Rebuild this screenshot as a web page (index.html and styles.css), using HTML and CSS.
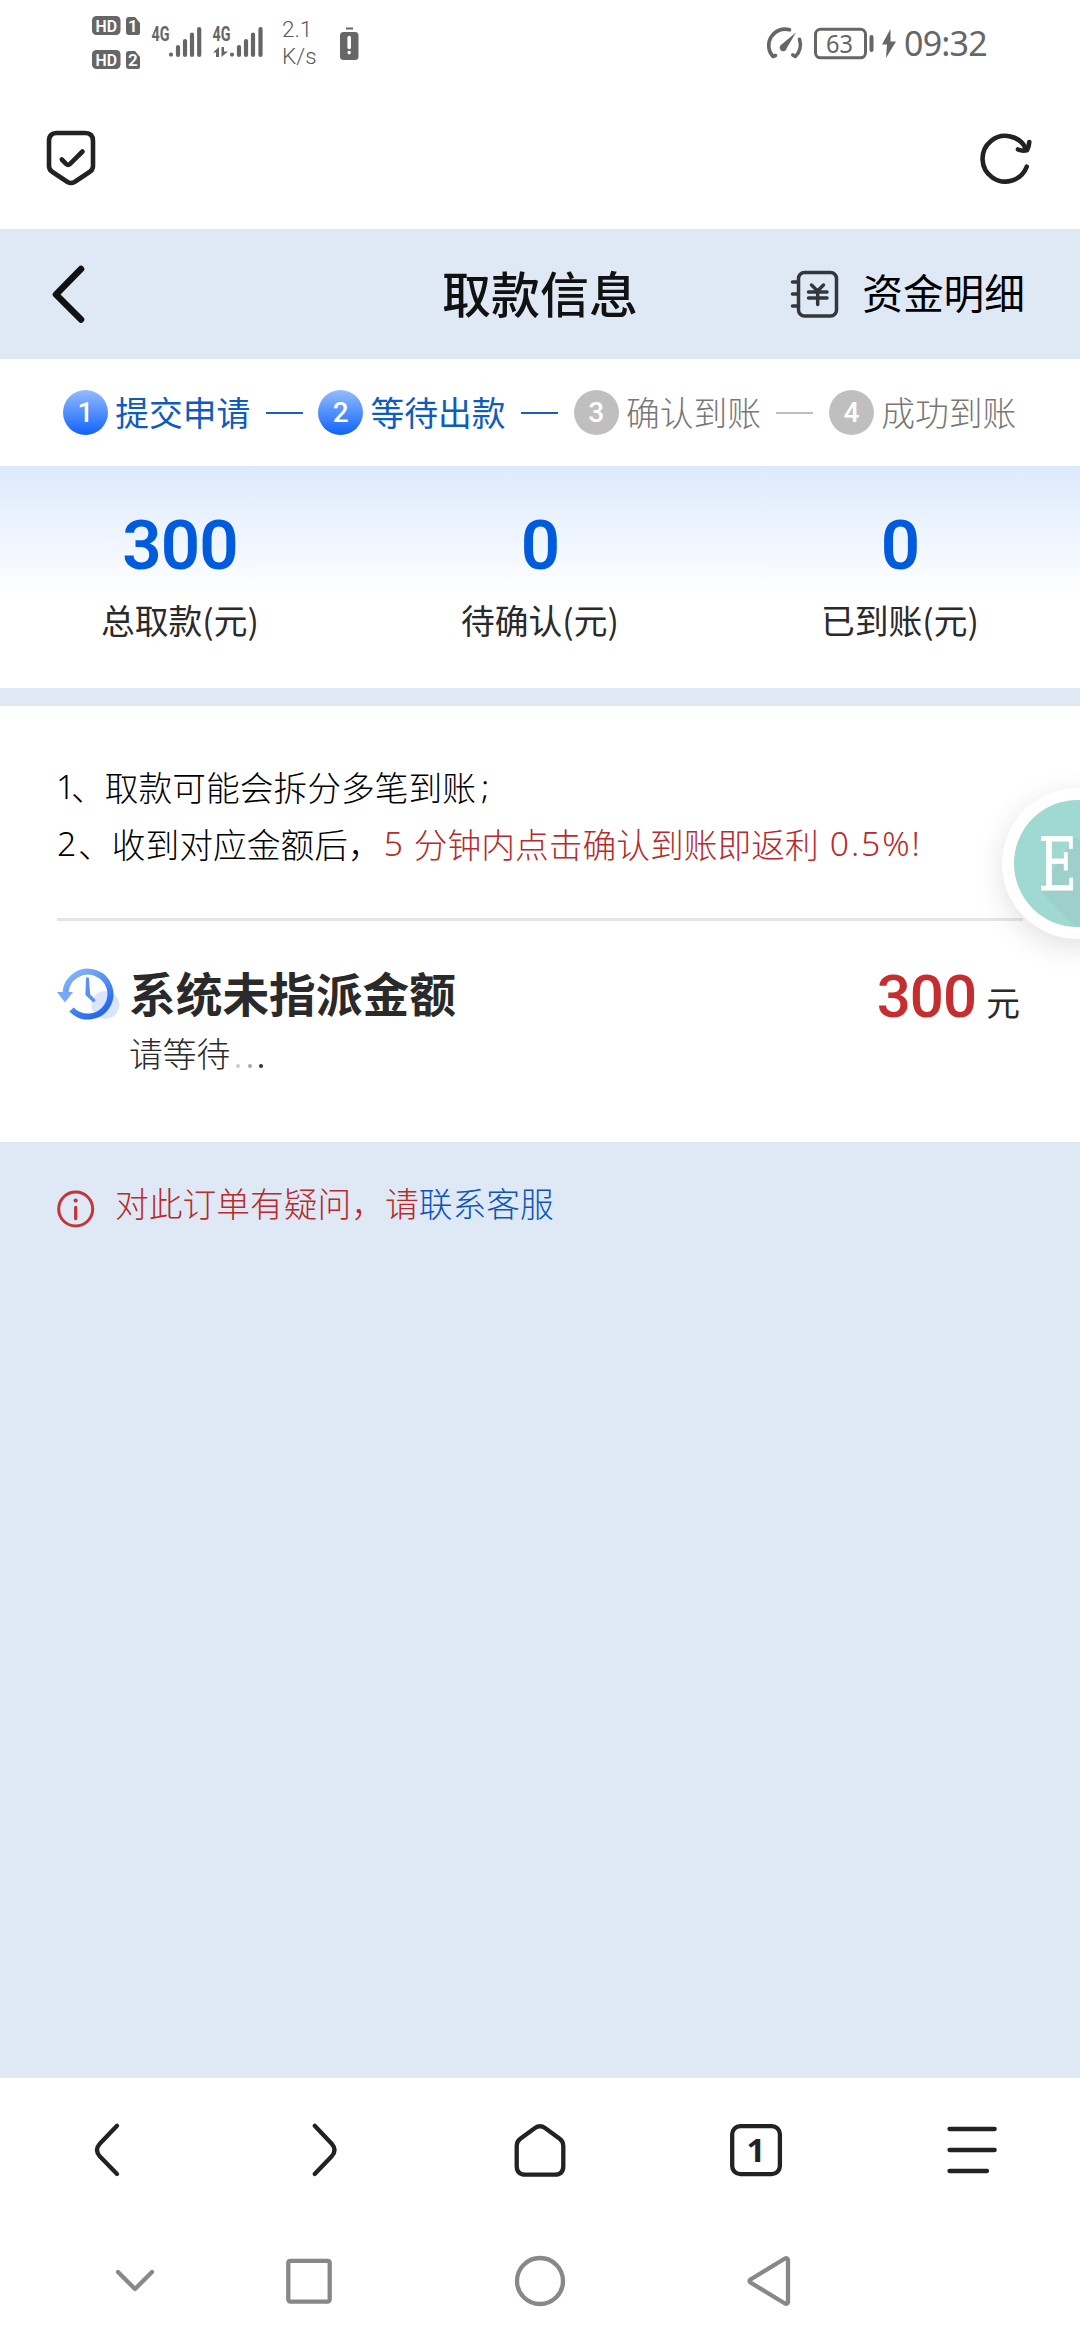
FILE: index.html
```html
<!DOCTYPE html>
<html lang="zh-CN">
<head>
<meta charset="utf-8">
<title>取款信息</title>
<link rel="stylesheet" href="styles.css">
</head>
<body>
<div class="screen">
  <div class="status-bar">
    <svg class="signals" width="174" height="60" viewBox="90 13 174 60">
      <g fill="#666">
        <rect x="92" y="16" width="28.5" height="19" rx="4.5"/>
        <rect x="92" y="50" width="28.5" height="19" rx="4.5"/>
        <path d="M129 17h6l5 6v10q0 2-2 2h-9q-3 0-3-3V20q0-3 3-3z"/>
        <path d="M129 51h6l5 6v10q0 2-2 2h-9q-3 0-3-3V54q0-3 3-3z"/>
      </g>
      <g class="badge-text">
        <text x="95.500" y="31.500" textLength="21.500" lengthAdjust="spacingAndGlyphs">HD</text>
        <text x="95.500" y="65.500" textLength="21.500" lengthAdjust="spacingAndGlyphs">HD</text>
        <text x="128" y="32">1</text>
        <text x="128" y="66">2</text>
      </g>
      <g class="net-text">
        <text x="151.500" y="41" textLength="18" lengthAdjust="spacingAndGlyphs">4G</text>
        <text x="212.500" y="41" textLength="18" lengthAdjust="spacingAndGlyphs">4G</text>
      </g>
      <g stroke="#666" stroke-width="4.2" stroke-linecap="round">
        <path d="M171 54.5v.1M178 47v8M185 41v14M192 34.500v20.500M199.200 29v26"/>
        <path d="M232 54.500v.1M239 47v8M246 41v14M253 34.500v20.500M260.500 29v26"/>
      </g>
      <path fill="#666" d="M213 52.500l6-5.500v10h-3v-4.500zM221.500 47h2.500v4.500h4l-6.500 5.500z"/>
    </svg>
    <div class="speed"><span>2.1</span><span>K/s</span></div>
    <svg class="sim-alert" width="19" height="33" viewBox="0 0 19 33">
      <path d="M6 1.500h7" stroke="#666" stroke-width="2"/>
      <rect y="5" width="18.500" height="28" rx="3.500" fill="#666"/>
      <path d="M9.200 10.500v10M9.200 25.500v.1" stroke="#fff" stroke-width="3.600" stroke-linecap="round"/>
    </svg>
    <svg class="gauge" width="38" height="33" viewBox="0 0 38 33">
      <g fill="none" stroke="#666" stroke-width="3.600" stroke-linecap="round" stroke-linejoin="round">
        <path d="M10.500 28.500L8 29.500A16.300 16.300 0 0 1 24.500 2.800M34.500 12.300A16.500 16.500 0 0 1 30.300 29.500l-2.500-1.500"/>
      </g>
      <path d="M31 5.500L21.800 21a3.600 3.600 0 1 1-5.300-3.500z" fill="#666"/>
    </svg>
    <svg class="battery" width="60" height="33" viewBox="0 0 60 33">
      <rect x="1.500" y="2.300" width="50" height="28.500" rx="5" fill="none" stroke="#666" stroke-width="3"/>
      <rect x="55.500" y="8" width="4" height="17" rx="2" fill="#666"/>
      <text x="12" y="25.500" textLength="27" lengthAdjust="spacingAndGlyphs">63</text>
    </svg>
    <svg class="bolt" width="14" height="29" viewBox="0 0 14 29"><path d="M8.500 0L0 15.500h5L4 29l10-16.500H8.500z" fill="#666"/></svg>
    <span class="clock">09:32</span>
  </div>

  <div class="browser-bar">
    <svg width="50" height="56" viewBox="0 0 50 56" fill="none" stroke="#222" stroke-width="4.600" stroke-linecap="round" stroke-linejoin="round">
      <path d="M11 3h28q8 0 8 8v25q0 4-3.500 6L28.500 52q-3.500 2-7 0L6.500 42Q3 40 3 36V11q0-8 8-8z"/>
      <path d="M15.800 29.500l4.300 4.300q2 2 4 0L36.500 21.500"/>
    </svg>
    <svg width="52" height="52" viewBox="0 0 52 52" fill="none" stroke="#222" stroke-width="4.600" stroke-linecap="round" stroke-linejoin="round">
      <path d="M46.700 34.700A22.800 22.800 0 1 1 46 17"/>
      <path d="M38 17.500q4 1.800 9 .8Q49 14 49.300 10"/>
    </svg>
  </div>

  <header class="page-header">
    <svg class="back" width="34" height="58" viewBox="0 0 34 58" fill="none" stroke="#111" stroke-width="6.600" stroke-linecap="round" stroke-linejoin="round"><path d="M30 4L5 29.500 30 54.500"/></svg>
    <h1>取款信息</h1>
    <a class="detail">
      <svg width="48" height="48" viewBox="0 0 48 48" fill="none" stroke="#33373d" stroke-width="3.500" stroke-linecap="round">
        <rect x="7.500" y="2.500" width="38" height="43.500" rx="6"/>
        <path d="M1.500 12h6M1.500 24h6M1.500 36h6"/>
        <path d="M20.500 15l6 6M32.500 15L26.500 21M17.500 22h18.500M17.500 28h18.500M26.700 22v12.500"/>
      </svg>
      <span>资金明细</span>
    </a>
  </header>

  <ol class="steps">
    <li class="step done"><b>1</b><span>提交申请</span></li>
    <li class="step done"><b>2</b><span>等待出款</span></li>
    <li class="step"><b>3</b><span>确认到账</span></li>
    <li class="step"><b>4</b><span>成功到账</span></li>
  </ol>

  <section class="stats">
    <div class="stat"><strong>300</strong><span>总取款(元)</span></div>
    <div class="stat"><strong>0</strong><span>待确认(元)</span></div>
    <div class="stat"><strong>0</strong><span>已到账(元)</span></div>
  </section>

  <section class="card">
    <div class="notes">
      <p><i class="n1">1</i>、取款可能会拆分多笔到账<i class="semi">;</i></p>
      <p><i class="n2">2</i>、收到对应金额后<span class="comma">，</span><em><i class="n5">5</i>分钟内点击确认到账即返利<i class="rate">0.5%!</i></em></p>
    </div>
    <div class="pending">
      <svg class="clock-icon" width="63" height="52" viewBox="0 0 63 52">
        <defs><linearGradient id="ring" x1="0" y1="0" x2=".7" y2="1"><stop offset="0" stop-color="#8dbbfa"/><stop offset="1" stop-color="#2468ec"/></linearGradient></defs>
        <circle cx="48.300" cy="37" r="14" fill="#dae5fc"/>
        <path d="M8.500 24A22.500 22.500 0 1 1 14.500 41.500" fill="none" stroke="url(#ring)" stroke-width="6"/>
        <path d="M0 24h16L8 34.500z" fill="#79a9f6"/>
        <path d="M29 9.500h2.800l1.400 16.700 5.600 6-2.400 2.300-8-7.500z" fill="#5a91f4"/>
      </svg>
      <div class="pending-text">
        <h2>系统未指派金额</h2>
        <p>请等待<span class="dots"><i></i><i></i><i></i></span></p>
      </div>
      <div class="amount"><strong>300</strong><span>元</span></div>
    </div>
  </section>

  <div class="help">
    <svg width="38" height="38" viewBox="0 0 38 38" fill="none" stroke="#c33537" stroke-linecap="round">
      <circle cx="18.700" cy="19" r="17" stroke-width="3"/>
      <path d="M18.700 17.500v11" stroke-width="3.300"/><path d="M18.700 10.500v.1" stroke-width="4.200"/>
    </svg>
    <p>对此订单有疑问，请<a>联系客服</a></p>
  </div>

  <nav class="browser-nav">
    <svg width="60" height="60" viewBox="0 0 60 60"><path d="M39 5.800L22 23.500q-6 6.500 0 13L39 54"/></svg>
    <svg width="60" height="60" viewBox="0 0 60 60"><path d="M20.700 5.800L37.500 23.500q6 6.500 0 13L20.700 54"/></svg>
    <svg width="60" height="60" viewBox="0 0 60 60"><path d="M6.700 26q0-4.500 3.600-7.200L25 8q5-3.500 10 0l14.700 10.800q3.600 2.700 3.600 7.200v20q0 8.700-8.700 8.700H15.400q-8.700 0-8.700-8.700z"/></svg>
    <svg width="60" height="60" viewBox="0 0 60 60"><rect x="6.200" y="6.100" width="47.700" height="48" rx="8"/><text x="20.500" y="42">1</text></svg>
    <svg width="60" height="60" viewBox="0 0 60 60"><path d="M7.500 9h45.200M7.500 30h45.200M7.500 51h37.500"/></svg>
  </nav>

  <nav class="system-nav">
    <svg width="56" height="56" viewBox="0 0 56 56"><path d="M11 19l17 17 17-17"/></svg>
    <svg width="56" height="56" viewBox="0 0 56 56"><rect x="7.300" y="7.800" width="41.400" height="40.800" rx="2"/></svg>
    <svg width="56" height="56" viewBox="0 0 56 56"><circle cx="28" cy="28" r="23"/></svg>
    <svg width="56" height="56" viewBox="0 0 56 56"><path d="M47 7v42q-.5 2.500-3 1.500L9.500 29.500q-2-1.500 0-3L44 5.500q2.500-1 3 1.500z"/></svg>
  </nav>

  <div class="floating">
    <svg width="127" height="127" viewBox="0 0 127 127">
      <defs><clipPath id="disc"><circle cx="63.500" cy="63.500" r="63.500"/></clipPath></defs>
      <circle cx="63.500" cy="63.500" r="63.500" fill="#a0d8d2"/>
      <path clip-path="url(#disc)" d="M25 90L61 37l66 66v24H62z" fill="#9dd0ca"/>
      <text x="24.500" y="89.500" textLength="38.500" lengthAdjust="spacingAndGlyphs">E</text>
    </svg>
  </div>
</div>
</body>
</html>
```
FILE: styles.css
```css
* { box-sizing: border-box; margin: 0; padding: 0; }
body { background: #fff; font-family: "Noto Sans CJK SC", sans-serif; color: #2a2a2a; }
i, em { font-style: normal; }
svg { display: block; flex: none; overflow: visible; }
.screen { position: relative; width: 1080px; height: 2340px; overflow: hidden; display: flex; flex-direction: column; background: #dfe9f5; font-size: 33.75px; line-height: 1; }

.status-bar { height: 86px; padding: 0 92px 0 90px; background: #fff; display: flex; align-items: center; color: #666; flex: none; }
.badge-text { font: 600 17px Roboto, sans-serif; fill: #fff; }
.net-text { font: 700 19.500px Roboto, sans-serif; fill: #666; }
.speed { width: 56px; margin-left: 18px; display: flex; flex-direction: column; font: 350 22.500px/27px Roboto, sans-serif; color: #5a5a5a; }
.sim-alert { margin-left: 2px; }
.gauge { margin-left: auto; }
.battery { margin-left: 11px; }
.battery text { font: 400 25px "Noto Sans", sans-serif; fill: #666; }
.bolt { margin-left: 8px; }
.clock { width: 84px; margin-left: 8px; font: 400 34px/40px "Noto Sans", sans-serif; letter-spacing: -.8px; }

.browser-bar { height: 143px; padding: 0 48px 0 46px; background: #fff; display: flex; align-items: center; justify-content: space-between; flex: none; }

.page-header { height: 130px; padding: 0 55px 0 51px; display: grid; grid-template-columns: 1fr auto 1fr; align-items: center; flex: none; }
.page-header h1 { font-weight: 500; font-size: 49px; color: #111; margin: -6px -4px 0 0; }
.detail { display: flex; align-items: center; justify-content: flex-end; gap: 23px; font-size: 40.700px; color: #000; }
.detail span { margin-top: -4px; }

.steps { height: 107px; padding-left: 63px; background: #fff; list-style: none; display: flex; align-items: center; flex: none; }
.step { display: flex; align-items: center; color: #777; font-weight: 300; }
.step span { margin-top: -2px; }
.step b { width: 45px; height: 45px; margin-right: 7.300px; border-radius: 50%; background: #bfbfbf; color: #fff; font: 500 28px/45px Roboto, sans-serif; text-align: center; }
.step:not(:last-child)::after { content: ""; width: 37px; height: 2px; margin: 0 15.500px; background: #bdbdbd; }
.step.done { color: #105bbf; font-weight: 400; }
.step.done b { background: linear-gradient(#94bcfd, #1062fb); }
.step.done:not(:last-child)::after { background: #1b5fba; }

.stats { height: 222px; padding-top: 45px; background: linear-gradient(#dceafd, #fff 60%); display: grid; grid-template-columns: repeat(3, 1fr); flex: none; }
.stat { display: flex; flex-direction: column; align-items: center; gap: 22px; }
.stat strong { font: 600 69px/70px Roboto, sans-serif; letter-spacing: -.9px; color: #005bdd; }

.card { height: 436px; margin-top: 18px; padding: 52px 57px 0; background: #fff; flex: none; }
.notes { height: 163px; border-bottom: 3px solid #e5e5e5; line-height: 57px; color: #000; font-weight: 300; white-space: nowrap; }
.notes i { font-family: "Noto Sans", sans-serif; display: inline-block; }
.notes p { display: flex; }
.notes em { color: #b92a2c; display: flex; }
.n1 { width: 14.500px; margin-left: -1px; margin-right: .5px; }
.n2 { width: 21px; }
.n5 { width: 30px; margin-left: 2px; }
.semi { margin-left: 5px; }
.rate { margin-left: 11px; letter-spacing: 1.900px; }
.pending { padding-top: 47px; display: flex; }
.pending-text { margin: -3px 0 0 9px; }
.pending h2 { font-size: 46.700px; font-weight: 700; line-height: 54px; }
.pending p { margin-top: 16px; font-weight: 300; line-height: 36px; display: flex; }
.dots { display: flex; gap: 7.500px; padding: 29px 0 0 6px; }
.dots i { width: 4px; height: 4px; border-radius: 50%; background: #333; }
.dots i:nth-child(1) { background: #ccc; }
.dots i:nth-child(2) { background: #aaa; }
.amount { height: 54px; margin: 2px 3px 0 auto; display: flex; align-items: baseline; gap: 10px; }
.amount strong { font: 500 60px/54px Roboto, sans-serif; letter-spacing: -.9px; color: #c62d2f; }
.amount span { position: relative; top: -1px; }

.help { padding: 44px 57px; display: flex; gap: 20px; color: #b92a2c; font-weight: 300; }
.help svg { margin-top: 4px; }
.help p { margin-top: -1px; line-height: 36px; }
.help a { color: #0b55bb; }

.browser-nav { height: 148px; margin-top: auto; padding-top: 42px; background: #fff; display: grid; grid-template-columns: repeat(5, 1fr); justify-items: center; flex: none; }
.browser-nav svg { fill: none; stroke: #222; stroke-width: 4.300px; stroke-linecap: round; stroke-linejoin: round; }
.browser-nav text { font: 700 33px "Noto Sans", sans-serif; fill: #222; stroke: none; }
.system-nav { height: 114px; padding-top: 27px; background: #fff; display: grid; grid-template-columns: 270px 78px 384px 74px; justify-items: center; flex: none; }
.system-nav svg { fill: none; stroke: #888; stroke-width: 4.300px; stroke-linecap: round; stroke-linejoin: round; }

.floating { position: absolute; left: 1002px; top: 788px; padding: 12px; border-radius: 50%; background: #fff; box-shadow: 0 8px 30px rgba(0, 0, 0, .12); }
.floating text { font: 400 73px "DejaVu Serif", serif; fill: #fff; stroke: #fff; stroke-width: .8px; }
```
